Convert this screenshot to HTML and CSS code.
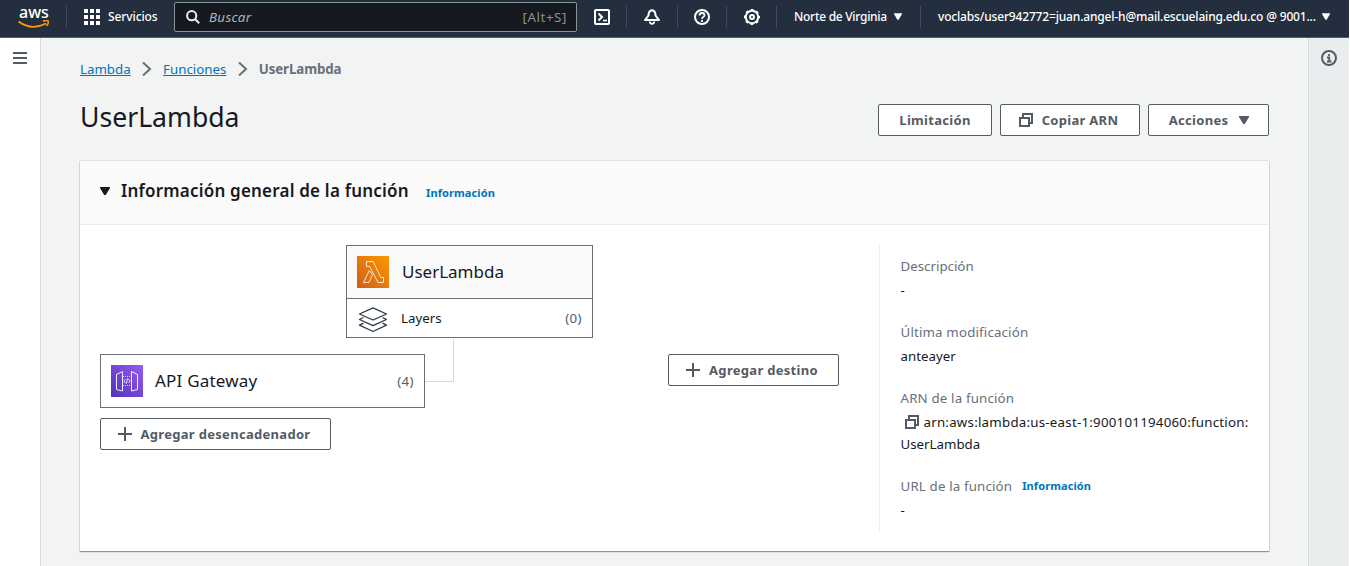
FILE: index.html
```html
<!DOCTYPE html>
<html lang="es">
<head>
<meta charset="utf-8">
<title>UserLambda - Lambda</title>
<link rel="stylesheet" href="styles.css">
</head>
<body>
<svg class="defs" width="0" height="0">
  <symbol id="copy" viewBox="0 0 16 16"><path d="M2 6h9v8H2zM5 5V2h9v9h-2" fill="none" stroke="currentColor" stroke-width="2"/></symbol>
  <symbol id="plus" viewBox="0 0 16 16"><path d="M8 1v14M1 8h14" stroke="currentColor" stroke-width="2"/></symbol>
  <symbol id="caret" viewBox="0 0 10 8"><path d="M0 0h10v1L5.800 8H4.200L0 1z" fill="currentColor"/></symbol>
  <symbol id="chev" viewBox="0 0 10 16"><path d="M1 1.500L8 8l-7 6.500" fill="none" stroke="currentColor" stroke-width="2"/></symbol>
</svg>
<header class="nav">
  <div class="logo"><span class="logo-text">aws</span>
    <svg class="smile" width="32" height="9" viewBox="0 0 32 9"><path d="M.5 1.500C9 7.700 19 8.200 28 3.500" fill="none" stroke="#ff9900" stroke-width="1.800"/><path d="M25 1.300c2-.8 4.500-.9 5.200-.2.500.8-.2 3.400-1.700 5" fill="none" stroke="#ff9900" stroke-width="1.500"/></svg>
  </div>
  <div class="services">
    <svg width="16" height="16" viewBox="0 0 16 16" fill="#fff"><path d="M0 0h4v4H0zM6 0h4v4H6zM12 0h4v4h-4zM0 6h4v4H0zM6 6h4v4H6zM12 6h4v4h-4zM0 12h4v4H0zM6 12h4v4H6zM12 12h4v4h-4z"/></svg>
    <span class="t-serv">Servicios</span>
  </div>
  <div class="search">
    <svg width="14" height="14" viewBox="0 0 14 14" fill="none" stroke="#eaeded" stroke-width="2"><circle cx="5.700" cy="5.700" r="4.600"/><path d="M9 9l4.200 4.200"/></svg>
    <span class="placeholder">Buscar</span><span class="shortcut">[Alt+S]</span>
  </div>
  <div class="tool"><svg width="16" height="16" viewBox="0 0 16 16" fill="none" stroke="#fff" stroke-width="2"><rect x="1" y="1" width="14" height="14" rx="1"/><path d="M4.500 4.500L8 8l-3.500 3.500"/><path d="M9 11.500h4" stroke-width="1.600"/></svg></div>
  <div class="tool bell"><svg width="16" height="16" viewBox="0 0 16 16" fill="none" stroke="#fff" stroke-width="2"><path d="M8 1.200C5.500 1.500 4.500 4 4.500 6.500L1 11h14l-3.500-4.500C11.500 4 10.500 1.500 8 1.200z" stroke-linejoin="round"/><path d="M5.800 12.500c0 1.500 1 2.300 2.200 2.300s2.200-.8 2.200-2.300" stroke-width="1.700"/></svg></div>
  <div class="tool help"><svg width="16" height="16" viewBox="0 0 16 16" fill="none" stroke="#fff" stroke-width="2"><circle cx="8" cy="8" r="7"/><path d="M5.500 6.500C5.500 4.500 6.500 4 8 4s2.500.8 2.500 2.200C10.500 8 8 7.800 8 10M8 11v2" stroke-width="1.800"/></svg></div>
  <div class="tool"><svg width="16" height="16" viewBox="0 0 16 16" fill="none" stroke="#fff"><circle cx="8" cy="8" r="6.200" stroke-width="2"/><circle cx="8" cy="8" r="7.300" stroke-width="1.400" stroke-dasharray="3 2.733" stroke-dashoffset="1.500"/><circle cx="8" cy="8" r="2" stroke-width="2"/></svg></div>
  <div class="region"><span class="t-region">Norte de Virginia</span><svg width="8" height="7"><use href="#caret" width="8" height="7"/></svg></div>
  <div class="account"><span class="t-account">voclabs/user942772=juan.angel-h@mail.escuelaing.edu.co @ 9001...</span><svg width="8" height="7"><use href="#caret" width="8" height="7"/></svg></div>
</header>
<div class="shell">
  <aside class="left"><svg width="14" height="12" viewBox="0 0 14 12"><path d="M0 1h14M0 6h14M0 11h14" stroke="#545b64" stroke-width="2"/></svg></aside>
  <main class="main">
    <nav class="crumbs"><a>Lambda</a><svg width="10" height="16"><use href="#chev"/></svg><a>Funciones</a><svg width="10" height="16"><use href="#chev"/></svg><b>UserLambda</b></nav>
    <div class="title-row">
      <h1>UserLambda</h1>
      <div class="actions">
        <button class="btn b-lim"><span>Limitación</span></button>
        <button class="btn b-arn"><svg width="16" height="16"><use href="#copy"/></svg><span>Copiar ARN</span></button>
        <button class="btn b-act"><span>Acciones</span><svg width="10" height="8"><use href="#caret"/></svg></button>
      </div>
    </div>
    <section class="panel">
      <div class="panel-head"><svg width="10" height="8"><use href="#caret"/></svg><h2>Información general de la función</h2><a class="info">Información</a></div>
      <div class="panel-body">
        <div class="designer">
          <div class="fn">
            <div class="fn-head">
              <svg width="32" height="32" viewBox="0 0 32 32"><defs><linearGradient id="go" x1="0" y1="1" x2="1" y2="0"><stop offset="0" stop-color="#d05c17"/><stop offset="1" stop-color="#f90"/></linearGradient></defs><path d="M0 0h32v32H0z" fill="url(#go)"/><path d="M12.300 14.500L6.500 26.500h5.300l3.700-7.600zM9.500 5.500v5h3.200l8.300 16h5.500v-5h-2.700L16.200 5.500z" fill="none" stroke="#fff" stroke-opacity=".9" stroke-width=".9" stroke-linejoin="round"/></svg>
              <span>UserLambda</span>
            </div>
            <div class="fn-layers">
              <svg width="30" height="28" viewBox="0 0 30 28" fill="none" stroke="#2b3a4a" stroke-width="1.300" stroke-linejoin="round"><path d="M15 1.800L28.500 8 15 14 1.500 8z"/><path d="M5.500 11.500l-4 2L15 19.700l13.500-6.200-4-2M5.500 17.200l-4 2L15 25.500l13.500-6.300-4-2"/></svg>
              <span class="lay">Layers</span><span class="count">(0)</span>
            </div>
          </div>
          <div class="lower">
            <div class="triggers">
              <div class="trigger">
                <svg width="32" height="32" viewBox="0 0 32 32"><defs><linearGradient id="gp" x1="0" y1="1" x2="1" y2="0"><stop offset="0" stop-color="#5630b8"/><stop offset="1" stop-color="#945df2"/></linearGradient></defs><path d="M0 0h32v32H0z" fill="url(#gp)"/><g fill="none" stroke="#fff" stroke-opacity=".9"><path d="M11.500 6.500L5.500 9.500v15l6 1.500zM20.500 6.500l6 3v15l-6 1.500z" stroke-width="1"/><path d="M12 11.500h9M12 20.500h9" stroke-width=".8" stroke-dasharray="1 1"/><path d="M14.500 14l-1.700 2 1.700 2M17.500 14l1.700 2-1.700 2M16.800 13.200l-1.600 5.600" stroke-width=".9"/></g></svg>
                <span class="api">API Gateway</span><span class="count">(4)</span>
              </div>
              <button class="btn b-trig"><svg width="16" height="16"><use href="#plus"/></svg><span>Agregar desencadenador</span></button>
            </div>
            <div class="link"></div>
            <button class="btn b-dest"><svg width="16" height="16"><use href="#plus"/></svg><span>Agregar destino</span></button>
          </div>
        </div>
        <dl class="details">
          <dt>Descripción</dt><dd>-</dd>
          <dt class="wide">Última modificación</dt><dd>anteayer</dd>
          <dt class="wide">ARN de la función</dt><dd class="arn"><svg width="16" height="16"><use href="#copy"/></svg><span class="arn-path">arn:aws:lambda:us-east-1:900101194060:function:</span><br><span>UserLambda</span></dd>
          <dt class="url wide"><span>URL de la función</span><a class="info">Información</a></dt><dd>-</dd>
        </dl>
      </div>
    </section>
  </main>
  <aside class="right"><svg width="16" height="16" viewBox="0 0 16 16" fill="none" stroke="#545b64"><circle cx="8" cy="8" r="7" stroke-width="2"/><path d="M8 4v2M6 7.500h2.200V12M6 11.500h4.500" stroke-width="1.800"/></svg></aside>
</div>
</body>
</html>
```
FILE: styles.css
```css
* { box-sizing: border-box; }
body { margin: 0; width: 1349px; height: 566px; overflow: hidden; background: #fff; color: #16191f; font: 13.3px/22px "Noto Sans", sans-serif; }
html { background: #fff; overflow: hidden; }
svg { display: block; flex: none; }
span, a, b { white-space: nowrap; }
.defs { position: absolute; }

.nav { display: flex; height: 38px; padding-bottom: 4px; align-items: center; background: #232f3e; border-bottom: 1px solid #545b64; color: #fff; font-size: 12px; font-weight: 500; }
.logo { width: 67px; height: 22px; padding-left: 18px; border-right: 1px solid #414b57; }
.logo-text { display: block; height: 13px; padding-left: 1px; font-size: 16px; line-height: 12px; }
.smile { margin-top: 1px; }
.services { display: flex; width: 107px; padding-left: 17px; align-items: center; gap: 8px; }
.t-serv { letter-spacing: -.1px; }
.search { display: flex; width: 403px; height: 30px; align-items: center; padding: 0 9px 0 11px; background: #16191f; border: 1px solid #879596; border-radius: 2px; font-weight: 400; font-size: 13.3px; }
.placeholder { margin-left: 9px; font-style: italic; letter-spacing: .35px; color: #aab7b8; }
.shortcut { margin-left: auto; letter-spacing: .6px; color: #879596; }
.tool { display: flex; width: 50px; height: 22px; align-items: center; justify-content: center; border-right: 1px solid #414b57; }
.tool.bell { width: 51px; padding-right: 1px; }
.tool.help { width: 49px; padding-right: 1px; }
.region { display: flex; width: 144px; height: 22px; align-items: center; padding-left: 17px; gap: 7px; border-right: 1px solid #414b57; }
.account { display: flex; align-items: center; padding-left: 17px; gap: 6px; }
.t-region { letter-spacing: -.28px; }
.t-account { letter-spacing: -.17px; }

.shell { display: flex; height: 528px; }
.left { width: 41px; border-right: 1px solid #d5dbdb; padding: 14px 0 0 13px; }
.right { width: 41px; border-left: 1px solid #d5dbdb; background: #eaeded; padding: 12px 0 0 12px; }
.main { flex: 1; background: #f2f3f3; padding: 20px 39px 0 39px; }

.crumbs { display: flex; height: 22px; align-items: center; gap: 11.2px; color: #687078; }
.crumbs a { color: #0073bb; text-decoration: underline; }
.crumbs b { font-weight: 700; letter-spacing: -.1px; }
.title-row { display: flex; justify-content: space-between; height: 81px; padding-top: 24px; }
h1 { margin: -5px 0 0; font-size: 26.6px; line-height: 36px; font-weight: 400; }
.actions { display: flex; gap: 8px; }
.btn { display: flex; height: 32px; align-items: center; justify-content: center; gap: 8px; padding: 0; background: #fff; border: 1px solid #545b64; border-radius: 2px; color: #545b64; font: 700 13px/20px "Noto Sans", sans-serif; letter-spacing: .3px; }
.b-lim { width: 114px; }
.b-arn { width: 140px; padding-right: 4px; }
.b-act { width: 121px; gap: 11px; padding-left: 1px; }

.panel { height: 390px; background: #fff; box-shadow: 0 1px 1px #879596, 0 0 1px #879596; }
.panel-head { display: flex; height: 64px; padding: 0 20px 3px; align-items: center; background: #fafafa; border-bottom: 1px solid #eaeded; }
h2 { width: 288px; margin: 0 17px 0 11px; font-size: 17px; line-height: 22px; font-weight: 600; letter-spacing: .2px; white-space: nowrap; }
.info { color: #0073bb; font-size: 11px; font-weight: 700; letter-spacing: .1px; }
.panel-head .info { margin-top: 3px; }
.panel-body { display: flex; padding: 20px; }
.designer { width: 779px; }
.fn { width: 247px; height: 93px; margin-left: 246px; border: 1px solid #687078; font-size: 17px; }
.fn-head { display: flex; height: 53px; align-items: center; padding-left: 10px; gap: 13px; background: #fafafa; border-bottom: 1px solid #687078; }
.fn-layers { display: flex; height: 38px; align-items: center; padding: 3px 10px 0 11px; font-size: 13.3px; }
.lay { margin: -4px 0 0 13px; }
.count { margin-left: auto; color: #545b64; font-size: 13.3px; letter-spacing: .4px; }
.fn-layers .count { margin-top: -4px; }
.lower { display: flex; padding-top: 16px; }
.triggers { width: 325px; }
.trigger { display: flex; height: 54px; align-items: center; padding: 0 10px; gap: 12px; border: 1px solid #687078; font-size: 17px; }
.api { letter-spacing: .2px; }
.b-trig { width: 231px; margin-top: 10px; padding-right: 4px; }
.link { width: 29px; height: 43px; margin-top: -15px; border-right: 1px solid #d5dbdb; border-bottom: 1px solid #d5dbdb; }
.b-dest { width: 171px; margin-left: 214px; padding-right: 4px; }
.details { width: 370px; height: 286px; margin: 0; padding: 10px 0 0 20.500px; border-left: 1px solid #eaeded; }
dt { color: #687078; height: 24px; }
dd { margin: 0 0 20px; }
.wide { letter-spacing: .16px; }
.arn svg { display: inline-block; vertical-align: -3px; margin: 0 4px 0 3px; color: #545b64; }
.arn-path { letter-spacing: .235px; }
.url { display: flex; gap: 10px; }
```
